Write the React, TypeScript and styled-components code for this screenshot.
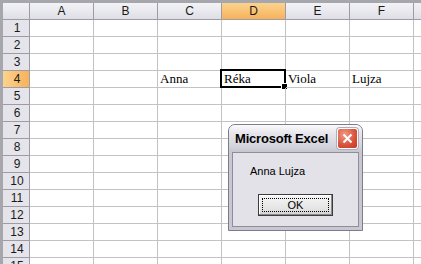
import { Fragment } from "react";
import styled, { createGlobalStyle } from "styled-components";

const GlobalStyle = createGlobalStyle`
  html, body {
    margin: 0;
    padding: 0;
    background: #ffffff;
  }
`;

const Frame = styled.div`
  position: relative;
  width: 421px;
  height: 264px;
  overflow: hidden;
  box-sizing: border-box;
  border-left: 3px solid #a6a6ad;
  border-top: 3px solid #a6a6ad;
  background: #ffffff;
`;

const Sheet = styled.div`
  display: grid;
  grid-template-columns: 27px repeat(7, 64px);
  grid-auto-rows: 17px;
  grid-template-rows: 17px;
`;

const ColHeader = styled.div<{ $active?: boolean }>`
  box-sizing: border-box;
  border-right: 1px solid #9d9ca6;
  border-bottom: 1px solid #9d9ca6;
  background: ${(p) =>
    p.$active
      ? "linear-gradient(#fbd38e, #f7b25c)"
      : "linear-gradient(#f3f3f6, #dedee6)"};
  font-family: "Liberation Sans", Arial, sans-serif;
  font-size: 12px;
  color: #1a1a1a;
  display: flex;
  align-items: center;
  justify-content: center;
  line-height: 1;
`;

const RowHeader = styled(ColHeader)`
  background: ${(p) =>
    p.$active ? "linear-gradient(90deg, #fbd38e, #f7b25c)" : "#e4e4ea"};
  padding-left: 2px;
`;

const Cell = styled.div`
  position: relative;
  box-sizing: border-box;
  border-right: 1px solid #c3c3c3;
  border-bottom: 1px solid #c3c3c3;
  font-family: "Liberation Serif", "Times New Roman", serif;
  font-size: 13px;
  color: #000;
  padding-left: 2px;
  line-height: 16px;
  white-space: nowrap;
`;

const ActiveBorder = styled.div`
  position: absolute;
  left: -2px;
  top: -2px;
  right: -1px;
  bottom: -1px;
  border: 2px solid #000;
  pointer-events: none;
`;

const FillHandle = styled.div`
  position: absolute;
  right: -4px;
  bottom: -4px;
  width: 5px;
  height: 5px;
  background: #000;
  border: 1px solid #fff;
`;

const Dialog = styled.div`
  position: absolute;
  left: 225px;
  top: 121px;
  width: 135px;
  height: 107px;
  box-sizing: border-box;
  display: flex;
  flex-direction: column;
  border: 1px solid #7d7c88;
  border-radius: 7px 7px 0 0;
  background: #e3e2e8;
  box-shadow: inset 0 0 0 2px #c9c8d2;
  overflow: hidden;
`;

const TitleBar = styled.div`
  height: 27px;
  flex-shrink: 0;
  display: flex;
  align-items: center;
  justify-content: space-between;
  padding: 0 4px 0 6px;
  background: linear-gradient(#fbfbfc 0%, #e6e6ec 30%, #d3d3db 80%, #c6c6cf 100%);
  font-family: "Liberation Sans", Arial, sans-serif;
  font-weight: bold;
  font-size: 13px;
  letter-spacing: -0.2px;
  color: #000;
`;

const CloseButton = styled.div`
  width: 19px;
  height: 19px;
  border: 1px solid #fff;
  border-radius: 3px;
  background: radial-gradient(circle at 35% 30%, #f29a86, #d9503a 60%, #c23a24);
  display: flex;
  align-items: center;
  justify-content: center;
  box-shadow: 0 0 0 1px #b0adb8;
`;

const Body = styled.div`
  flex: 1;
  display: flex;
  flex-direction: column;
  padding: 13px 0 0 18px;
  border: 2px solid #c9c8d2;
  border-top: 0;
  margin: 0 1px 1px;
  box-shadow: inset 0 0 0 1px #8e8d98;
`;

const Message = styled.div`
  font-family: "Liberation Sans", Tahoma, sans-serif;
  font-size: 11px;
  color: #000;
`;

const OkButton = styled.div`
  margin-top: 17px;
  margin-left: 8px;
  width: 75px;
  height: 22px;
  box-sizing: border-box;
  border: 1px solid #3c3c3c;
  background: linear-gradient(#f6f6f6, #e4e4e4 70%, #cfcfcf);
  box-shadow: inset -1px -1px 0 #8c8c8c, inset 1px 1px 0 #ffffff;
  padding: 3px;
  font-family: "Liberation Sans", Tahoma, sans-serif;
  font-size: 11px;
  color: #000;
`;

const FocusRect = styled.div`
  height: 100%;
  box-sizing: border-box;
  border: 1px dotted #000;
  display: flex;
  align-items: center;
  justify-content: center;
`;

const columns = ["A", "B", "C", "D", "E", "F", ""];
const values: Record<string, string> = { C: "Anna", D: "Réka", E: "Viola", F: "Lujza" };

const App = () => {
  const rows = Array.from({ length: 15 }, (_, i) => i + 1);
  return (
    <>
      <GlobalStyle />
      <Frame>
        <Sheet>
          <ColHeader />
          {columns.map((c, i) => (
            <ColHeader key={i} $active={c === "D"}>
              {c}
            </ColHeader>
          ))}
          {rows.map((r) => (
            <Fragment key={r}>
              <RowHeader $active={r === 4}>{r}</RowHeader>
              {columns.map((c, i) => (
                <Cell key={i}>
                  {r === 4 ? values[c] : null}
                  {r === 4 && c === "D" && (
                    <ActiveBorder>
                      <FillHandle />
                    </ActiveBorder>
                  )}
                </Cell>
              ))}
            </Fragment>
          ))}
        </Sheet>
        <Dialog>
          <TitleBar>
            <span>Microsoft Excel</span>
            <CloseButton>
              <svg width="11" height="11" viewBox="0 0 11 11">
                <path d="M1.5 1.5 L9.5 9.5 M9.5 1.5 L1.5 9.5" stroke="#fff" strokeWidth="2" />
              </svg>
            </CloseButton>
          </TitleBar>
          <Body>
            <Message>Anna Lujza</Message>
            <OkButton>
              <FocusRect>OK</FocusRect>
            </OkButton>
          </Body>
        </Dialog>
      </Frame>
    </>
  );
};

export default App;
